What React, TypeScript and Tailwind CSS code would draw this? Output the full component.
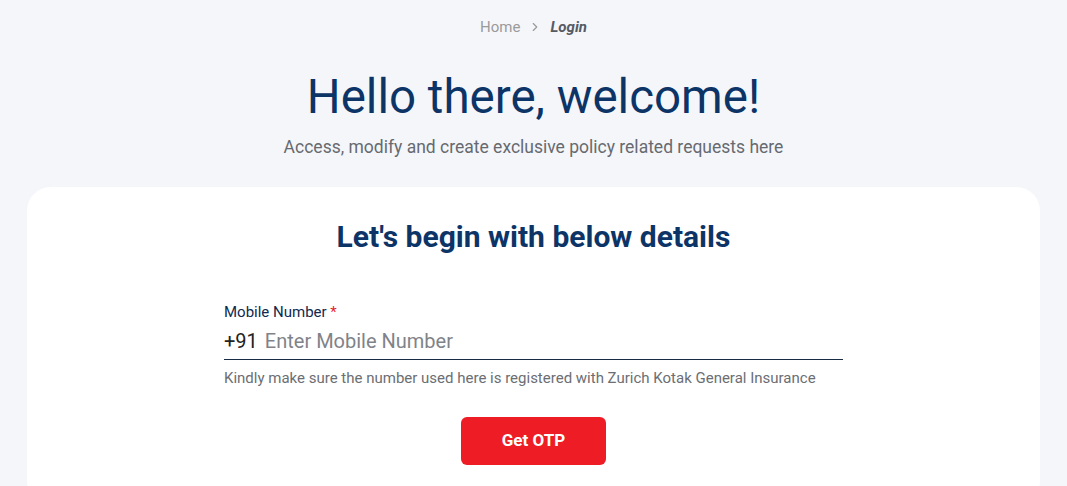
import { ChevronRight } from "lucide-react";

export default function App() {
  return (
    <div
      className="min-h-screen bg-[#f5f6fa] px-[27px] overflow-hidden"
      style={{ fontFamily: "Roboto, 'Liberation Sans', sans-serif" }}
    >
      {/* Breadcrumb */}
      <nav className="flex items-center justify-center gap-[8px] pt-[17px] text-[15px] leading-5">
        <span className="text-[#9a9a9a]">Home</span>
        <ChevronRight className="w-[14px] h-[14px] text-[#9a9a9a]" strokeWidth={2} />
        <span className="font-bold italic text-[#555a63]">Login</span>
      </nav>

      {/* Hero */}
      <div className="text-center mt-[32px]">
        <h1 className="text-[47.5px] leading-[56px] text-[#0d3467]">Hello there, welcome!</h1>
        <p className="mt-[10px] text-[17.5px] leading-6 text-[#666a70]">
          Access, modify and create exclusive policy related requests here
        </p>
      </div>

      {/* Card */}
      <div className="mt-[28px] bg-white rounded-[24px] pt-[32px] pb-[40px]">
        <h2 className="text-center text-[30px] leading-[36px] font-bold text-[#0d3467]">
          Let's begin with below details
        </h2>

        <div className="w-[619px] mx-auto mt-[47px]">
          <label className="block text-[15px] leading-5 text-[#10294d]">
            Mobile Number <span className="text-[#e5222e]">*</span>
          </label>
          <div className="flex items-center gap-[7px] border-b border-[#1a2b45] mt-[6px] pb-[5px]">
            <span className="text-[20px] leading-[26px] text-[#222]">+91</span>
            <input
              className="flex-1 bg-transparent outline-none text-[20px] leading-[26px] placeholder:text-[#7f8389] text-[#222]"
              placeholder="Enter Mobile Number"
            />
          </div>
          <p className="mt-[8px] text-[15px] leading-5 text-[#6b6e73]">
            Kindly make sure the number used here is registered with Zurich Kotak General Insurance
          </p>

          <div className="flex justify-center mt-[29px]">
            <button className="w-[145px] h-[48px] rounded-[6px] bg-[#ee1c25] text-white font-bold text-[17px]">
              Get OTP
            </button>
          </div>
        </div>
      </div>
    </div>
  );
}
